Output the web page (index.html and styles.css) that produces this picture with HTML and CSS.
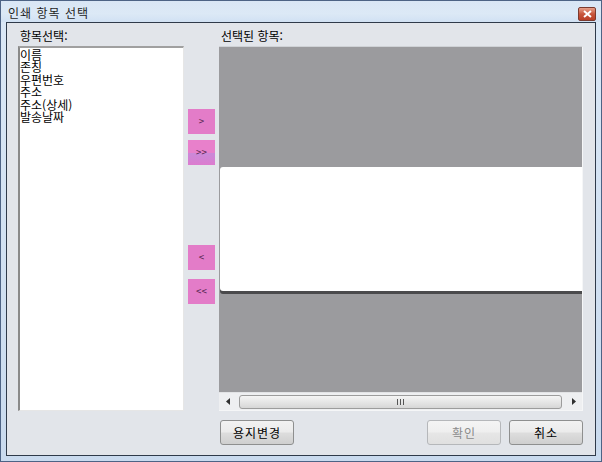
FILE: index.html
```html
<!DOCTYPE html>
<html lang="ko">
<head>
    <meta charset="UTF-8">
    <title>인쇄 항목 선택</title>
    <link rel="stylesheet" href="styles.css">
</head>
<body>
    <div class="window">
        <!-- 제목 표시줄 -->
        <div class="titlebar">
            <span class="title">인쇄 항목 선택</span>
            <div class="close">
                <svg width="9" height="8" viewBox="0 0 9 8">
                    <path d="M1 1 L8 7 M8 1 L1 7" stroke="#fff" stroke-width="2"/>
                </svg>
            </div>
        </div>

        <div class="client">
            <div class="main">
                <div class="col-left">
                    <div class="label">항목선택:</div>
                    <ul class="list">
                        <li>이름</li>
                        <li>존칭</li>
                        <li>우편번호</li>
                        <li>주소</li>
                        <li>주소(상세)</li>
                        <li>발송날짜</li>
                    </ul>
                </div>

                <div class="col-mid">
                    <div class="arrow btn-add">&gt;</div>
                    <div class="arrow btn-addall">&gt;&gt;</div>
                    <div class="arrow btn-del">&lt;</div>
                    <div class="arrow btn-delall">&lt;&lt;</div>
                </div>

                <div class="col-right">
                    <div class="label">선택된 항목:</div>
                    <div class="preview">
                        <div class="canvas">
                            <div class="page"></div>
                        </div>
                        <div class="hscroll">
                            <div class="sb-arrow">
                                <svg width="4" height="7" viewBox="0 0 4 7"><path d="M4 0 L0 3.5 L4 7Z" fill="#303030"/></svg>
                            </div>
                            <div class="thumb"><span class="grip"></span></div>
                            <div class="sb-arrow">
                                <svg width="4" height="7" viewBox="0 0 4 7"><path d="M0 0 L4 3.5 L0 7Z" fill="#303030"/></svg>
                            </div>
                        </div>
                    </div>
                </div>
            </div>

            <div class="footer">
                <button class="btn">용지변경</button>
                <div class="spacer"></div>
                <button class="btn" disabled>확인</button>
                <button class="btn">취소</button>
            </div>
        </div>
    </div>
</body>
</html>
```

FILE: styles.css
```css
/*초기화*/
html,body{
    margin: 0;
    padding: 0;
}
body{
    font-family: "Noto Sans CJK KR", "Liberation Sans", sans-serif;
    font-size: 12px;
    color: #000;
}
ul,li{
    margin: 0;
    padding: 0;
    list-style: none;
}

/*1.창 전체*/
.window{
    width: 602px;
    height: 462px;
    box-sizing: border-box;
    background: linear-gradient(#dbe8f6, #c9daee);
    border: 1px solid #4d6385;
    display: flex;
    flex-direction: column;
}

/*2.제목 표시줄*/
.titlebar{
    height: 21px;
    display: flex;
    align-items: center;
    padding: 0 5px 0 7px;
    background: linear-gradient(#d9e6f5, #dce9f6 60%, #d1e1f3);
}
.title{
    flex: 1;
    font-size: 12px;
    color: #1e1e1e;
    letter-spacing: 1px;
    margin-top: 1px;
}
.close{
    width: 16px;
    height: 12px;
    margin-top: 4px;
    border: 1px solid #7b3a2e;
    border-radius: 2px;
    background: linear-gradient(#e6a08a, #c8563c 50%, #b93e26);
    display: flex;
    align-items: center;
    justify-content: center;
}

/*3.클라이언트 영역*/
.client{
    flex: 1;
    margin: 0 5px 5px 5px;
    border: 1px solid #2f3a4a;
    background: #e2e5ea;
    padding: 4px 12px 8px 11px;
    display: flex;
    flex-direction: column;
}
.main{
    display: flex;
    height: 384px;
}
.label{
    height: 19px;
    line-height: 18px;
    padding-left: 2px;
    font-size: 12px;
}
.col-left{
    width: 166px;
    display: flex;
    flex-direction: column;
}
.list{
    flex: 1;
    background: #fff;
    border-top: 2px solid #a0a0a0;
    border-left: 2px solid #8a8a8a;
    border-right: 1px solid #e6e6e6;
    border-bottom: 1px solid #e6e6e6;
    padding: 1px 0 0 0;
}
.list li{
    height: 12.4px;
    line-height: 12.4px;
    font-size: 12px;
    overflow: visible;
}

/*4.가운데 버튼*/
.col-mid{
    width: 35px;
    display: flex;
    flex-direction: column;
    align-items: center;
    padding-top: 82px;
}
.arrow{
    width: 27px;
    height: 25px;
    background: #e37cc8;
    color: #5b2a55;
    font-family: "DejaVu Sans Mono", monospace;
    font-size: 9px;
    line-height: 25px;
    text-align: center;
    cursor: pointer;
}
.btn-addall{
    margin-top: 6px;
    background: linear-gradient(#e880cb 50%, #c98ad9 50%, #dc7ccf);
}
.btn-del{
    margin-top: 80px;
}
.btn-delall{
    margin-top: 9px;
}

/*5.오른쪽 미리보기*/
.col-right{
    flex: 1;
    display: flex;
    flex-direction: column;
}
.preview{
    flex: 1;
    display: flex;
    flex-direction: column;
    border-top: 1px solid #cfd2d6;
    border-right: 1px solid #f5f6f7;
    border-bottom: 1px solid #f5f6f7;
    background: #9b9b9e;
}
.canvas{
    flex: 1;
    padding-top: 120px;
}
.page{
    height: 124px;
    margin-left: 1px;
    background: #fff;
    border-radius: 3px 0 0 3px;
    box-shadow: 0 3px 0 #4a4a4c;
}

/*6.가로 스크롤바*/
.hscroll{
    height: 17px;
    display: flex;
    align-items: center;
    background: #eeeff1;
    border-top: 1px solid #e2e3e5;
}
.sb-arrow{
    width: 17px;
    height: 17px;
    display: flex;
    align-items: center;
    justify-content: center;
}
.thumb{
    flex: 1;
    height: 14px;
    margin: 0 3px;
    box-sizing: border-box;
    border: 1px solid #9c9c9c;
    border-radius: 3px;
    background: linear-gradient(#f5f5f5, #e6e6e6 50%, #d6d6d6);
    display: flex;
    align-items: center;
    justify-content: center;
}
.grip{
    width: 7px;
    height: 6px;
    background: repeating-linear-gradient(90deg, #555 0 1px, transparent 1px 3px);
}

/*7.하단 버튼*/
.footer{
    display: flex;
    margin-top: 9px;
    padding-left: 202px;
    gap: 8px;
}
.spacer{
    flex: 1;
}
.btn{
    width: 74px;
    height: 25px;
    font-family: "Noto Sans CJK KR", "Liberation Sans", sans-serif;
    font-size: 12px;
    color: #000;
    border: 1px solid #8e8f8f;
    border-radius: 3px;
    background: linear-gradient(#f2f2f2, #ebebeb 48%, #dddddd 52%, #cfcfcf);
    padding: 0;
    letter-spacing: 1px;
}
.btn:disabled{
    color: #8b8b8b;
    border-color: #b5b7ba;
    background: linear-gradient(#f4f4f4, #efefef 48%, #e6e6e6 52%, #e0e0e0);
}
```
